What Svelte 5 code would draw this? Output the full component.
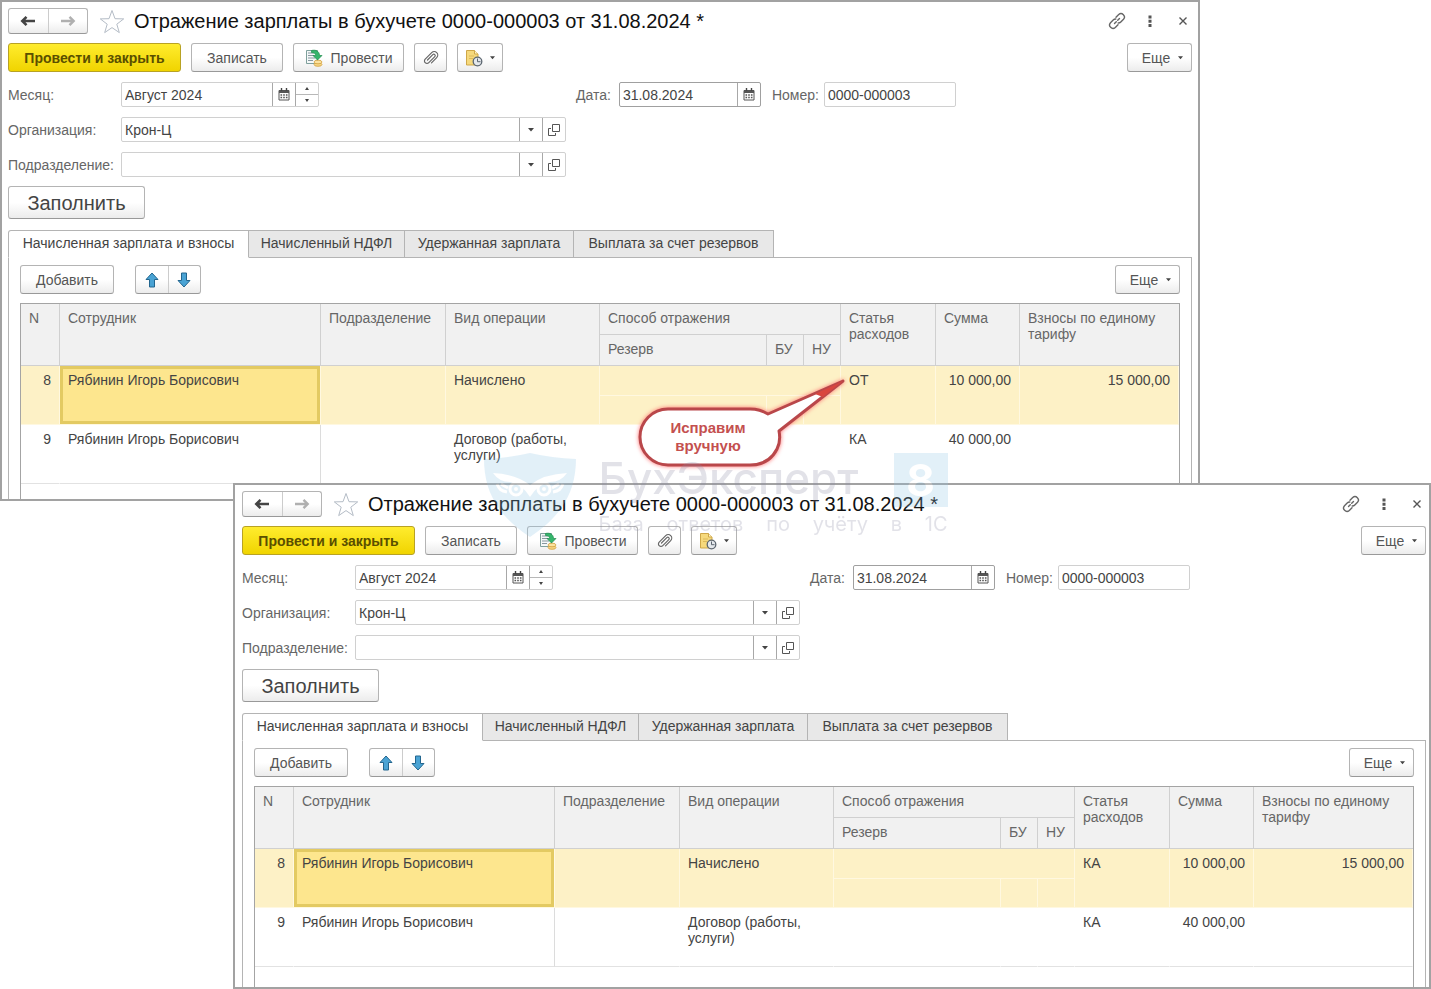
<script>
  const tabs = [
    'Начисленная зарплата и взносы',
    'Начисленный НДФЛ',
    'Удержанная зарплата',
    'Выплата за счет резервов'
  ];

  const windows = [
    { id: 'back', article: 'ОТ', callout: true },
    { id: 'front', article: 'КА', callout: false }
  ];

  // строки табличной части, статья первой строки у окон разная
  function getRows(article) {
    return [
      { n: 8, name: 'Рябинин Игорь Борисович', kind: 'Начислено', article, sum: '10 000,00', tax: '15 000,00', current: true },
      { n: 9, name: 'Рябинин Игорь Борисович', kind: 'Договор (работы, услуги)', article: 'КА', sum: '40 000,00', tax: '', current: false }
    ];
  }
</script>

{#snippet calendar()}
  <svg width="12" height="13" viewBox="0 0 12 13" aria-hidden="true">
    <path d="M1 2.5h10v9.5H1z" fill="#fff" stroke="#555" />
    <path d="M1 2h10v3H1z" fill="#555" />
    <path d="M3.5 0v3M8.5 0v3" stroke="#444" stroke-width="1.4" />
    <path d="M2.5 7h7M2.5 9.5h7" stroke="#555" stroke-width="1.5" stroke-dasharray="1.6 1.1" />
  </svg>
{/snippet}

{#snippet caret()}
  <svg class="caret" width="6" height="4" viewBox="0 0 6 4" aria-hidden="true">
    <path d="M0 0h6L3 3.6z" fill="#444" />
  </svg>
{/snippet}

{#snippet refField(id, label, value)}
  <div class="row">
    <label for={id}>{label}</label>
    <div class="field wide">
      <div class="select">
        <select {id}>
          <option>{value}</option>
        </select>
        {@render caret()}
      </div>
      <button class="inner" aria-label="Открыть">
        <svg width="12" height="12" viewBox="0 0 12 12" fill="none" stroke="#555" aria-hidden="true">
          <path d="M4.500 .5h7v7h-7z" />
          <path d="M3 4.500H.5v7h7V9" />
        </svg>
      </button>
    </div>
  </div>
{/snippet}

<main>
  {#each windows as win}
    <section class="window {win.id}">
      <header>
        <div class="group nav">
          <button aria-label="Назад">
            <svg width="16" height="12" viewBox="0 0 16 12" aria-hidden="true">
              <path d="M15 6H3M6.500 1.800L2.300 6l4.200 4.200" fill="none" stroke="#444" stroke-width="2.600" />
            </svg>
          </button>
          <button aria-label="Вперед">
            <svg width="16" height="12" viewBox="0 0 16 12" aria-hidden="true">
              <path d="M1 6h12M9.500 1.800L13.700 6l-4.200 4.200" fill="none" stroke="#b0b0b0" stroke-width="2.400" />
            </svg>
          </button>
        </div>
        <button class="plain star" aria-label="В избранное">
          <svg width="26" height="25" viewBox="0 0 26 25" aria-hidden="true">
            <path d="M13 1.500l3 8.200 8.700.2-6.900 5.300 2.500 8.400L13 18.600l-7.300 5 2.500-8.400L1.300 9.900l8.700-.2z" fill="#fff" stroke="#b4bcc6" />
          </svg>
        </button>
        <h1>Отражение зарплаты в бухучете 0000-000003 от 31.08.2024 *</h1>
        <div class="system">
          <button class="plain" aria-label="Ссылка">
            <svg width="18" height="18" viewBox="0 0 18 18" fill="none" stroke="#666" stroke-width="1.400" stroke-linecap="round" aria-hidden="true">
              <path d="M8 5.200l2.700-2.700a3.400 3.400 0 0 1 4.800 4.800l-2.700 2.700a3.400 3.400 0 0 1-2.600 1" />
              <path d="M10 12.800l-2.700 2.700a3.400 3.400 0 0 1-4.800-4.800l2.700-2.700a3.400 3.400 0 0 1 2.600-1" />
              <path d="M6.500 11.500l1.800-1.800M9.700 8.300l1.800-1.800" />
            </svg>
          </button>
          <button class="plain" aria-label="Меню">
            <svg width="18" height="18" viewBox="0 0 18 18" fill="#555" aria-hidden="true">
              <path d="M7.500 3.500h3v3h-3zM7.500 7.700h3v3h-3zM7.500 11.900h3v3h-3z" />
            </svg>
          </button>
          <button class="plain" aria-label="Закрыть">
            <svg width="18" height="18" viewBox="0 0 18 18" stroke="#555" stroke-width="1.400" aria-hidden="true">
              <path d="M5.500 5.500l7 7M12.500 5.500l-7 7" />
            </svg>
          </button>
        </div>
      </header>

      <div class="commands">
        <button class="btn primary">Провести и закрыть</button>
        <button class="btn write">Записать</button>
        <button class="btn post">
          <svg width="18" height="18" viewBox="0 0 18 18" aria-hidden="true">
            <path d="M1.500 1.500h11v13h-11z" fill="#f4f8f8" stroke="#7fa09c" />
            <path d="M3 4h6M3 6.500h6M3 9h7M3 11.500h5" stroke="#8797a0" />
            <ellipse cx="13" cy="15.500" rx="4" ry="1.800" fill="#f6d684" stroke="#d2a03e" stroke-width=".8" />
            <ellipse cx="13" cy="13" rx="4" ry="1.800" fill="#fbe3a0" stroke="#d2a03e" stroke-width=".8" />
            <path d="M6.500 1.500c4-1 8 .5 8 5h2.500L12.500 11 8 6.500h2.700c0-2-1.700-3-4.200-3z" fill="#35b56c" stroke="#1f8d4e" stroke-width=".7" />
          </svg>
          Провести
        </button>
        <button class="btn clip" aria-label="Файлы">
          <svg width="16" height="16" viewBox="0 0 16 16" fill="none" stroke="#666" stroke-width="1.200" stroke-linecap="round" aria-hidden="true">
            <path d="M4.500 10l5.300-5.300a1.400 1.400 0 0 1 2 2l-6 6a2.500 2.500 0 0 1-3.600-3.600l6.500-6.500a3.500 3.500 0 0 1 5 5L8.500 12.800" />
          </svg>
        </button>
        <button class="btn create" aria-label="Создать на основании">
          <svg width="18" height="18" viewBox="0 0 18 18" aria-hidden="true">
            <path d="M1.500 1.500h8l3.500 3.500v11h-11.500z" fill="#f6d97c" stroke="#cfa748" />
            <path d="M9.500 1.500V5H13" fill="#fff3c8" stroke="#cfa748" />
            <path d="M4 7h5M4 9.500h4" stroke="#dcb95a" />
            <circle cx="12.500" cy="12.500" r="4.300" fill="#e4e8ec" stroke="#5c6670" stroke-width="1.300" />
            <path d="M12.500 9.500v3.200h3" fill="none" stroke="#5c6670" />
          </svg>
          {@render caret()}
        </button>
        <button class="btn more">Еще {@render caret()}</button>
      </div>

      <div class="form">
        <div class="left">
          <div class="row">
            <label for="month-{win.id}">Месяц:</label>
            <div class="field month">
              <input id="month-{win.id}" type="text" value="Август 2024" />
              <button class="inner" aria-label="Выбрать месяц">{@render calendar()}</button>
              <div class="spin">
                <button aria-label="Следующий месяц">
                  <svg width="4" height="3" viewBox="0 0 4 3"><path d="M0 3h4L2 0z" fill="#444" /></svg>
                </button>
                <button aria-label="Предыдущий месяц">
                  <svg width="4" height="3" viewBox="0 0 4 3"><path d="M0 0h4L2 3z" fill="#444" /></svg>
                </button>
              </div>
            </div>
          </div>
          {@render refField('org-' + win.id, 'Организация:', 'Крон-Ц')}
          {@render refField('dep-' + win.id, 'Подразделение:', '')}
        </div>
        <div class="right">
          <label for="date-{win.id}">Дата:</label>
          <div class="field date">
            <input id="date-{win.id}" type="text" value="31.08.2024" />
            <button class="inner" aria-label="Выбрать дату">{@render calendar()}</button>
          </div>
          <label class="number-label" for="number-{win.id}">Номер:</label>
          <div class="field number">
            <input id="number-{win.id}" type="text" value="0000-000003" />
          </div>
        </div>
      </div>

      <button class="btn fill">Заполнить</button>

      <div class="tabs" role="tablist">
        {#each tabs as tab, i}
          <button role="tab" aria-selected={i === 0} class:active={i === 0}>{tab}</button>
        {/each}
      </div>

      <div class="panel">
        <div class="commands">
          <button class="btn add">Добавить</button>
          <div class="group move">
            <button aria-label="Вверх">
              <svg width="14" height="16" viewBox="0 0 14 16" aria-hidden="true">
                <path d="M7 1l6 6.500H9.500V15h-5V7.500H1z" fill="#4aa3d4" stroke="#23668f" />
              </svg>
            </button>
            <button aria-label="Вниз">
              <svg width="14" height="16" viewBox="0 0 14 16" aria-hidden="true">
                <path d="M7 15l6-6.500H9.500V1h-5v7.500H1z" fill="#4aa3d4" stroke="#23668f" />
              </svg>
            </button>
          </div>
          <button class="btn more">Еще {@render caret()}</button>
        </div>

        <div class="grid">
          <table>
            <colgroup>
              <col class="c-n" />
              <col class="c-name" />
              <col class="c-dep" />
              <col class="c-kind" />
              <col class="c-reserve" />
              <col class="c-flag" />
              <col class="c-flag" />
              <col class="c-article" />
              <col class="c-sum" />
              <col />
            </colgroup>
            <thead>
              <tr>
                <th rowspan="2">N</th>
                <th rowspan="2">Сотрудник</th>
                <th rowspan="2">Подразделение</th>
                <th rowspan="2">Вид операции</th>
                <th colspan="3" class="top">Способ отражения</th>
                <th rowspan="2">Статья расходов</th>
                <th rowspan="2">Сумма</th>
                <th rowspan="2">Взносы по единому тарифу</th>
              </tr>
              <tr>
                <th>Резерв</th>
                <th>БУ</th>
                <th>НУ</th>
              </tr>
            </thead>
            {#each getRows(win.article) as row}
              <tbody class:current={row.current}>
                <tr>
                  <td rowspan="2" class="num">{row.n}</td>
                  <td rowspan="2" class="name">{row.name}</td>
                  <td rowspan="2"></td>
                  <td rowspan="2">{row.kind}</td>
                  <td colspan="3" class="top"></td>
                  <td rowspan="2">{row.article}</td>
                  <td rowspan="2" class="num">{row.sum}</td>
                  <td rowspan="2" class="num">{row.tax}</td>
                </tr>
                <tr>
                  <td></td>
                  <td></td>
                  <td></td>
                </tr>
              </tbody>
            {/each}
          </table>
        </div>
      </div>

      {#if win.callout}
        <div class="callout">
          <svg width="212" height="96" viewBox="0 0 212 96" aria-hidden="true">
            <path
              d="M32 34H114Q124 34 132 39L207 6 143 56Q145 66 141 74 133 90 114 90H32A28 28 0 0 1 32 34Z"
              fill="#fff" stroke="#b9474a" stroke-width="3" stroke-linejoin="round"
            />
            <path d="M207 6L179 19 187 22z" fill="#d9453f" />
          </svg>
          <p>Исправим вручную</p>
        </div>
      {/if}
    </section>
  {/each}

  <div class="watermark">
    <svg width="92" height="84" viewBox="0 0 92 84" aria-hidden="true">
      <path d="M0 6Q24 5 46 0 68 5 92 6C92 36 80 62 46 84 12 62 0 36 0 6z" fill="#8fc4e4" />
      <path d="M9 20Q32 21 46 32 60 21 83 20 77 29 66 29 54 31 46 44 38 31 26 29 15 29 9 20z" fill="#fff" />
      <g fill="none" stroke="#fff" stroke-width="3">
        <circle cx="32" cy="36" r="6" />
        <circle cx="60" cy="36" r="6" />
        <path d="M13 31c2 5 4 7 10 8M17 31l7 4M79 31c-2 5-4 7-10 8M75 31l-7 4" />
      </g>
      <circle cx="32" cy="36" r="2" fill="#fff" />
      <circle cx="60" cy="36" r="2" fill="#fff" />
    </svg>
    <div class="brand">
      <div class="brand-name"><span>БухЭксперт</span><b>8</b></div>
      <div class="slogan">
        <span>База</span> <span>ответов</span> <span>по</span> <span>учёту</span> <span>в</span> <span>1С</span>
      </div>
    </div>
  </div>
</main>

<style>
  :global(body) {
    background: #fff;
  }

  main {
    position: relative;
    overflow: hidden;
    font-family: 'Liberation Sans', Arial, sans-serif;
    font-size: 14px;
    line-height: 16px;
    color: #444;
  }

  button,
  input,
  select {
    box-sizing: border-box;
    margin: 0;
    padding: 0;
    font: inherit;
    color: inherit;
    border: 0;
    background: none;
  }

  svg {
    display: block;
    flex: none;
  }

  .window {
    position: relative;
    box-sizing: border-box;
    border: 2px solid #a2a2a2;
    background: #fff;
  }

  .back {
    margin-right: 231px;
    padding: 6px 6px 0;
  }

  .front {
    margin: -18px 0 0 233px;
    padding: 6px 3px 0 7px;
  }

  header {
    display: flex;
    align-items: center;
    height: 26px;
  }

  h1 {
    margin: 0 0 0 9px;
    font-size: 20px;
    line-height: 24px;
    font-weight: 400;
    color: #111;
    white-space: nowrap;
  }

  .plain {
    display: flex;
    align-items: center;
    justify-content: center;
  }

  .star {
    margin-left: 11px;
  }

  .system {
    display: flex;
    gap: 15px;
    margin-left: auto;
  }

  .group {
    display: flex;
    box-sizing: border-box;
    border: 1px solid #b4b4b4;
    border-bottom-color: #999;
    border-radius: 3px;
    background: linear-gradient(#fff 50%, #ececec);
  }

  .group button {
    display: flex;
    flex: 1;
    align-items: center;
    justify-content: center;
  }

  .group button + button {
    border-left: 1px solid #ccc;
  }

  .nav {
    width: 80px;
    height: 26px;
  }

  .move {
    width: 66px;
    height: 29px;
    margin-left: 11px;
  }

  .commands {
    display: flex;
    gap: 10px;
    margin-top: 9px;
  }

  .btn {
    display: flex;
    align-items: center;
    justify-content: center;
    height: 29px;
    border: 1px solid #b4b4b4;
    border-bottom-color: #999;
    border-radius: 3px;
    background: linear-gradient(#fff 50%, #ececec);
    color: #555;
    white-space: nowrap;
  }

  .primary {
    width: 173px;
    border-color: #b8a224;
    background: linear-gradient(#ffec2e, #f0d400);
    color: #5a4f00;
    font-weight: 700;
  }

  .write {
    width: 92px;
  }

  .post {
    gap: 8px;
    width: 111px;
  }

  .clip {
    width: 33px;
  }

  .create {
    gap: 7px;
    width: 46px;
  }

  .more {
    gap: 8px;
    width: 65px;
    padding-left: 6px;
    margin-left: auto;
  }

  .more .caret,
  .create .caret {
    width: 5px;
  }

  .add {
    width: 94px;
  }

  .fill {
    width: 137px;
    height: 33px;
    margin-top: 9px;
    font-size: 20px;
    line-height: 24px;
    color: #444;
  }

  .form {
    display: flex;
    gap: 10px;
    margin-top: 10px;
  }

  .left {
    display: flex;
    flex-direction: column;
    gap: 10px;
  }

  .row,
  .right {
    display: flex;
    align-items: center;
    height: 25px;
  }

  .row label {
    width: 113px;
  }

  label {
    color: #666;
    white-space: nowrap;
  }

  .field {
    display: flex;
    box-sizing: border-box;
    height: 25px;
    border: 1px solid #d0d0d0;
    border-radius: 2px;
  }

  .field input {
    flex: 1;
    min-width: 0;
    padding-left: 3px;
  }

  .wide {
    width: 445px;
  }

  .month {
    width: 198px;
  }

  .date {
    width: 142px;
    margin-left: 8px;
    border-color: #a0a0a0;
  }

  .number-label {
    margin-left: 11px;
  }

  .number {
    width: 132px;
    margin-left: 5px;
  }

  .inner {
    display: flex;
    align-items: center;
    justify-content: center;
    width: 23px;
    border-left: 1px solid #a8a8a8;
  }

  .spin {
    display: flex;
    flex-direction: column;
    width: 22px;
    border-left: 1px solid #a8a8a8;
  }

  .spin button {
    display: flex;
    flex: 1;
    align-items: center;
    justify-content: center;
  }

  .spin button + button {
    border-top: 1px solid #b8b8b8;
  }

  .select {
    position: relative;
    display: flex;
    flex: 1;
  }

  .select select {
    flex: 1;
    padding-left: 3px;
    appearance: none;
  }

  .select::after {
    content: '';
    position: absolute;
    top: 0;
    right: 22px;
    bottom: 0;
    border-left: 1px solid #a8a8a8;
  }

  .select .caret {
    position: absolute;
    top: 10px;
    right: 8px;
    pointer-events: none;
  }

  .tabs {
    display: grid;
    grid-template-columns: 241px 156px 169px 200px;
    height: 28px;
    margin-top: 11px;
    margin-bottom: -1px;
  }

  .tabs button {
    position: relative;
    padding-bottom: 2px;
    border: 1px solid #b4b4b4;
    border-left: 0;
    background: #e8e8e8;
    white-space: nowrap;
  }

  .tabs .active {
    border-left: 1px solid #b4b4b4;
    border-bottom-color: #fff;
    border-top-left-radius: 3px;
    background: #fff;
  }

  .panel {
    padding: 7px 11px 0;
    border: 1px solid #b4b4b4;
    border-bottom: 0;
  }

  .panel .commands {
    margin-top: 0;
  }

  .grid {
    margin-top: 9px;
    border: 1px solid #a4a4a4;
    border-bottom: 0;
  }

  .back .grid {
    padding-bottom: 15px;
  }

  .front .grid {
    padding-bottom: 20px;
  }

  table {
    width: 100%;
    table-layout: fixed;
    border-spacing: 0;
  }

  .c-n {
    width: 39px;
  }

  .c-name {
    width: 261px;
  }

  .c-dep {
    width: 125px;
  }

  .c-kind {
    width: 154px;
  }

  .c-reserve {
    width: 167px;
  }

  .c-flag {
    width: 37px;
  }

  .c-article {
    width: 95px;
  }

  .c-sum {
    width: 84px;
  }

  th,
  td {
    box-sizing: border-box;
    padding: 6px 8px 0;
    text-align: left;
    vertical-align: top;
    font-weight: 400;
  }

  th {
    height: 31px;
    border-right: 1px solid #d0d0d0;
    border-bottom: 1px solid #d0d0d0;
    background: #f1f1f1;
    color: #666;
  }

  th:last-child[rowspan] {
    border-right: 0;
  }

  td {
    height: 29px;
    border-right: 1px solid transparent;
  }

  td.top {
    height: 30px;
  }

  tbody td[rowspan] {
    border-bottom: 1px solid #e2e2e2;
  }

  tbody tr + tr td {
    border-bottom: 1px solid #e2e2e2;
  }

  .name {
    border-right-color: #dcdcdc;
  }

  .num {
    text-align: right;
  }

  tbody.current td {
    border-color: #fff8e0;
    background: #fdf1c6;
  }

  tbody.current .top {
    border-bottom: 1px solid #fff8e0;
  }

  tbody.current .name {
    background: #fde68e;
    box-shadow: inset 0 0 0 3px #e3ca62;
  }

  .callout {
    position: absolute;
    top: 373px;
    left: 634px;
  }

  .callout svg {
    filter: drop-shadow(0 0 2px #ff7070);
  }

  .callout p {
    position: absolute;
    top: 44px;
    left: 22px;
    width: 100px;
    margin: 0;
    font-size: 15px;
    line-height: 18px;
    font-weight: 700;
    text-align: center;
    color: #c4504f;
  }

  .watermark {
    position: absolute;
    top: 453px;
    left: 50%;
    display: flex;
    gap: 23px;
    width: 464px;
    transform: translateX(-50%);
    opacity: 0.25;
    pointer-events: none;
  }

  .brand {
    flex: 1;
    color: #8d8da8;
  }

  .brand-name {
    display: flex;
    justify-content: space-between;
    font-family: Inter, 'Open Sans', sans-serif;
    font-size: 44px;
    line-height: 50px;
    font-weight: 500;
  }

  .brand-name b {
    width: 54px;
    background: #8fc4e4;
    color: #fff;
    line-height: 54px;
    text-align: center;
  }

  .slogan {
    display: flex;
    justify-content: space-between;
    margin-top: 5px;
    font-family: Inter, 'Open Sans', sans-serif;
    font-size: 20px;
    line-height: 24px;
  }
</style>
